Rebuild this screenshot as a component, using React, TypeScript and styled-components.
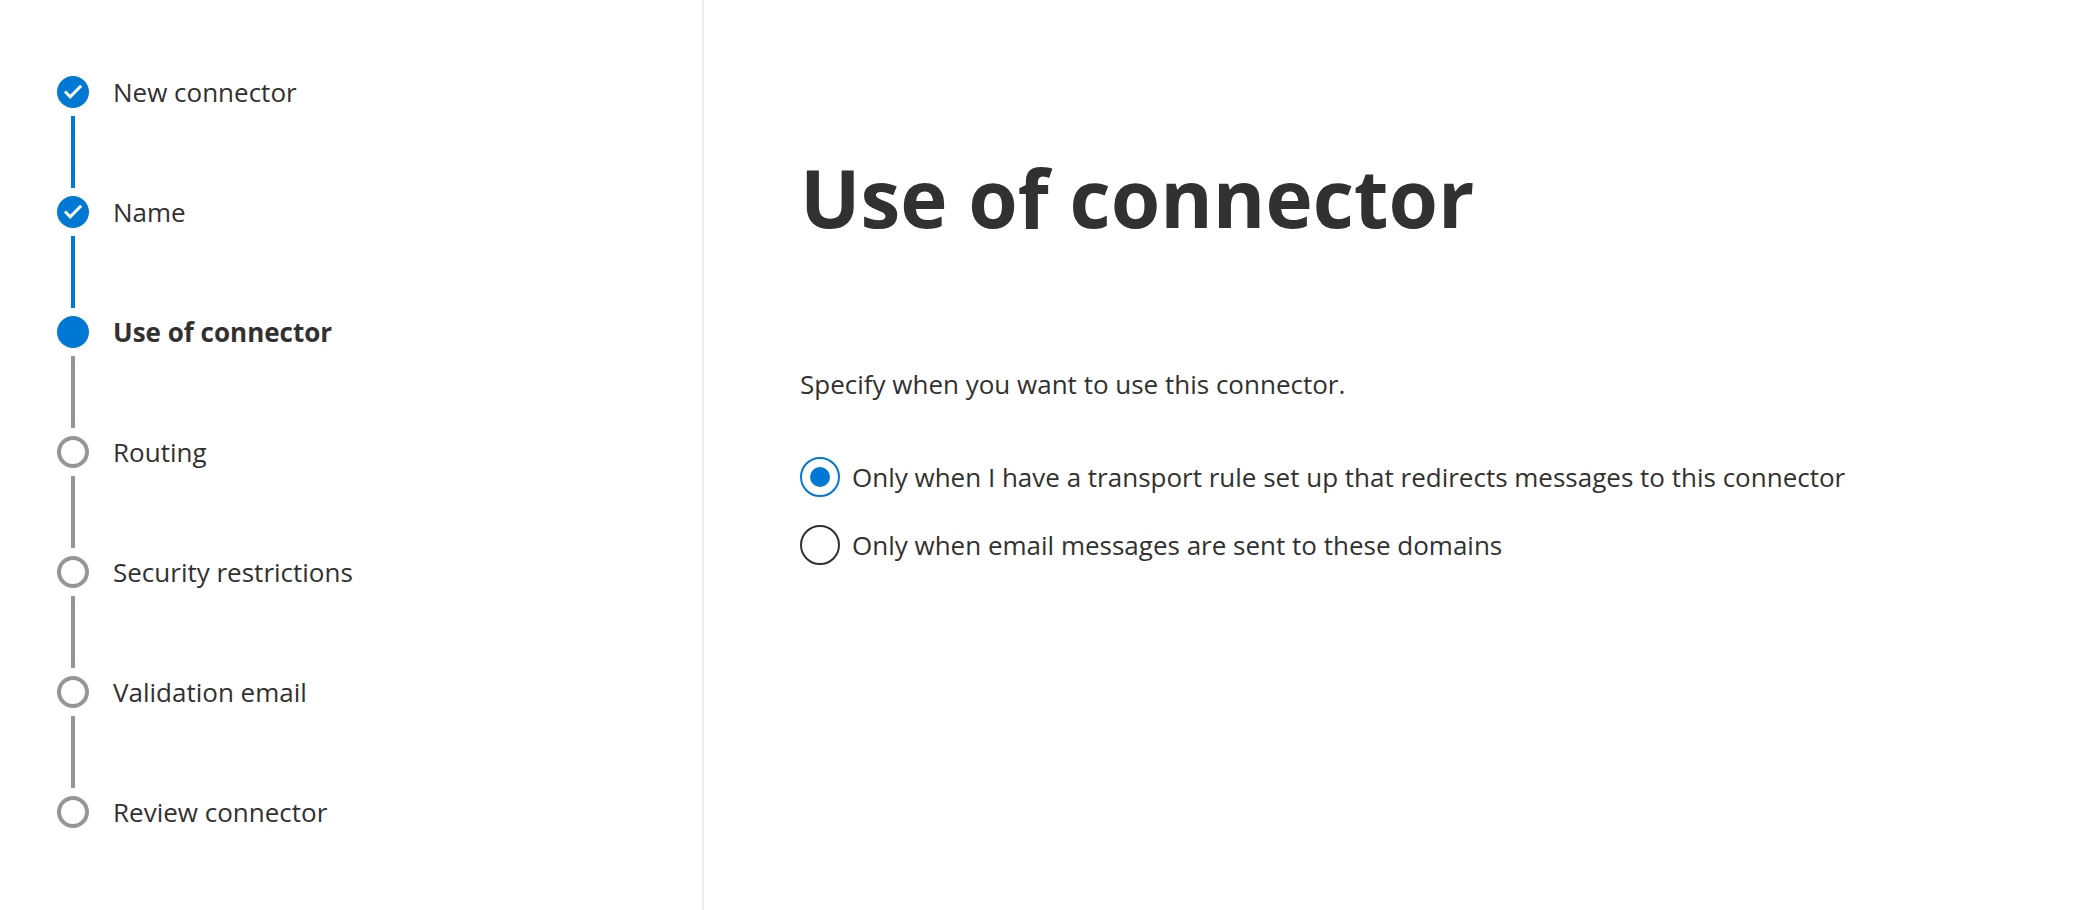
import React, { useState } from "react";
import styled, { createGlobalStyle } from "styled-components";

const GlobalStyle = createGlobalStyle`
  *, *::before, *::after {
    box-sizing: border-box;
  }

  body {
    margin: 0;
    background: #ffffff;
    color: #323130;
    font-family: "Segoe UI", "Open Sans", "Noto Sans", sans-serif;
    font-size: 26px;
    line-height: 40px;
  }
`;

const BLUE = "#0078d4";
const GREY = "#979593";

type StepState = "done" | "current" | "upcoming";

const Page = styled.div`
  display: flex;
  min-height: 100vh;
`;

const Sidebar = styled.nav`
  flex: 0 0 704px;
  padding: 72px 56px;
  border-right: 2px solid #edebe9;
`;

const StepList = styled.ol`
  margin: 0;
  padding: 0;
  list-style: none;
`;

const Step = styled.li<{ $state: StepState }>`
  display: grid;
  grid-template-columns: 34px 1fr;
  grid-template-rows: 40px auto;
  column-gap: 23px;
  align-items: center;
  justify-items: center;
  font-weight: ${(p) => (p.$state === "current" ? 700 : 400)};
`;

const Marker = styled.span<{ $state: StepState }>`
  display: flex;
  align-items: center;
  justify-content: center;
  width: 32px;
  height: 32px;
  border: 4px solid ${(p) => (p.$state === "upcoming" ? GREY : BLUE)};
  border-radius: 50%;
  background: ${(p) => (p.$state === "upcoming" ? "#ffffff" : BLUE)};
`;

const StepLabel = styled.span`
  justify-self: start;
`;

const StepLine = styled.span<{ $done: boolean }>`
  width: 4px;
  height: 72px;
  margin: 4px 0;
  background: ${(p) => (p.$done ? BLUE : GREY)};
`;

const Main = styled.main`
  flex: 1;
  padding: 143px 96px 96px;
`;

const Title = styled.h1`
  margin: 0 0 113px;
  font-size: 80px;
  line-height: 108px;
  font-weight: 700;
`;

const Options = styled.fieldset`
  display: flex;
  flex-direction: column;
  gap: 28px;
  margin: 0;
  padding: 0;
  border: 0;
`;

const Prompt = styled.legend`
  margin-bottom: 53px;
  padding: 0;
`;

const Option = styled.label`
  display: flex;
  align-items: center;
  gap: 12px;
  cursor: pointer;
`;

const Radio = styled.input`
  display: grid;
  flex: none;
  place-content: center;
  width: 40px;
  height: 40px;
  margin: 0;
  border: 2px solid #323130;
  border-radius: 50%;
  appearance: none;
  cursor: pointer;

  &:checked {
    border-color: ${BLUE};
  }

  &:checked::before {
    width: 20px;
    height: 20px;
    border-radius: 50%;
    background: ${BLUE};
    content: "";
  }
`;

const CheckIcon = styled.svg`
  flex: none;
  width: 24px;
  height: 24px;
`;

const CheckMark = () => (
  <CheckIcon viewBox="0 0 24 24" fill="none" aria-hidden="true">
    <path d="M4 11.5L9.2 16.9L20.2 5.8" stroke="#ffffff" strokeWidth="3" />
  </CheckIcon>
);

const steps: { label: string; state: StepState }[] = [
  { label: "New connector", state: "done" },
  { label: "Name", state: "done" },
  { label: "Use of connector", state: "current" },
  { label: "Routing", state: "upcoming" },
  { label: "Security restrictions", state: "upcoming" },
  { label: "Validation email", state: "upcoming" },
  { label: "Review connector", state: "upcoming" },
];

const options = [
  { value: "rule", label: "Only when I have a transport rule set up that redirects messages to this connector" },
  { value: "domains", label: "Only when email messages are sent to these domains" },
];

export default function App() {
  const [selected, setSelected] = useState("rule");

  return (
    <>
      <GlobalStyle />
      <Page>
        <Sidebar aria-label="Connector steps">
          <StepList>
            {steps.map(({ label, state }, index) => (
              <Step key={label} $state={state} aria-current={state === "current" ? "step" : undefined}>
                <Marker $state={state}>{state === "done" && <CheckMark />}</Marker>
                <StepLabel>{label}</StepLabel>
                {index < steps.length - 1 && <StepLine $done={state === "done"} />}
              </Step>
            ))}
          </StepList>
        </Sidebar>
        <Main>
          <Title>Use of connector</Title>
          <Options>
            <Prompt>Specify when you want to use this connector.</Prompt>
            {options.map(({ value, label }) => (
              <Option key={value} htmlFor={value}>
                <Radio
                  type="radio"
                  id={value}
                  name="connector-use"
                  value={value}
                  checked={selected === value}
                  onChange={() => setSelected(value)}
                />
                <span>{label}</span>
              </Option>
            ))}
          </Options>
        </Main>
      </Page>
    </>
  );
}
